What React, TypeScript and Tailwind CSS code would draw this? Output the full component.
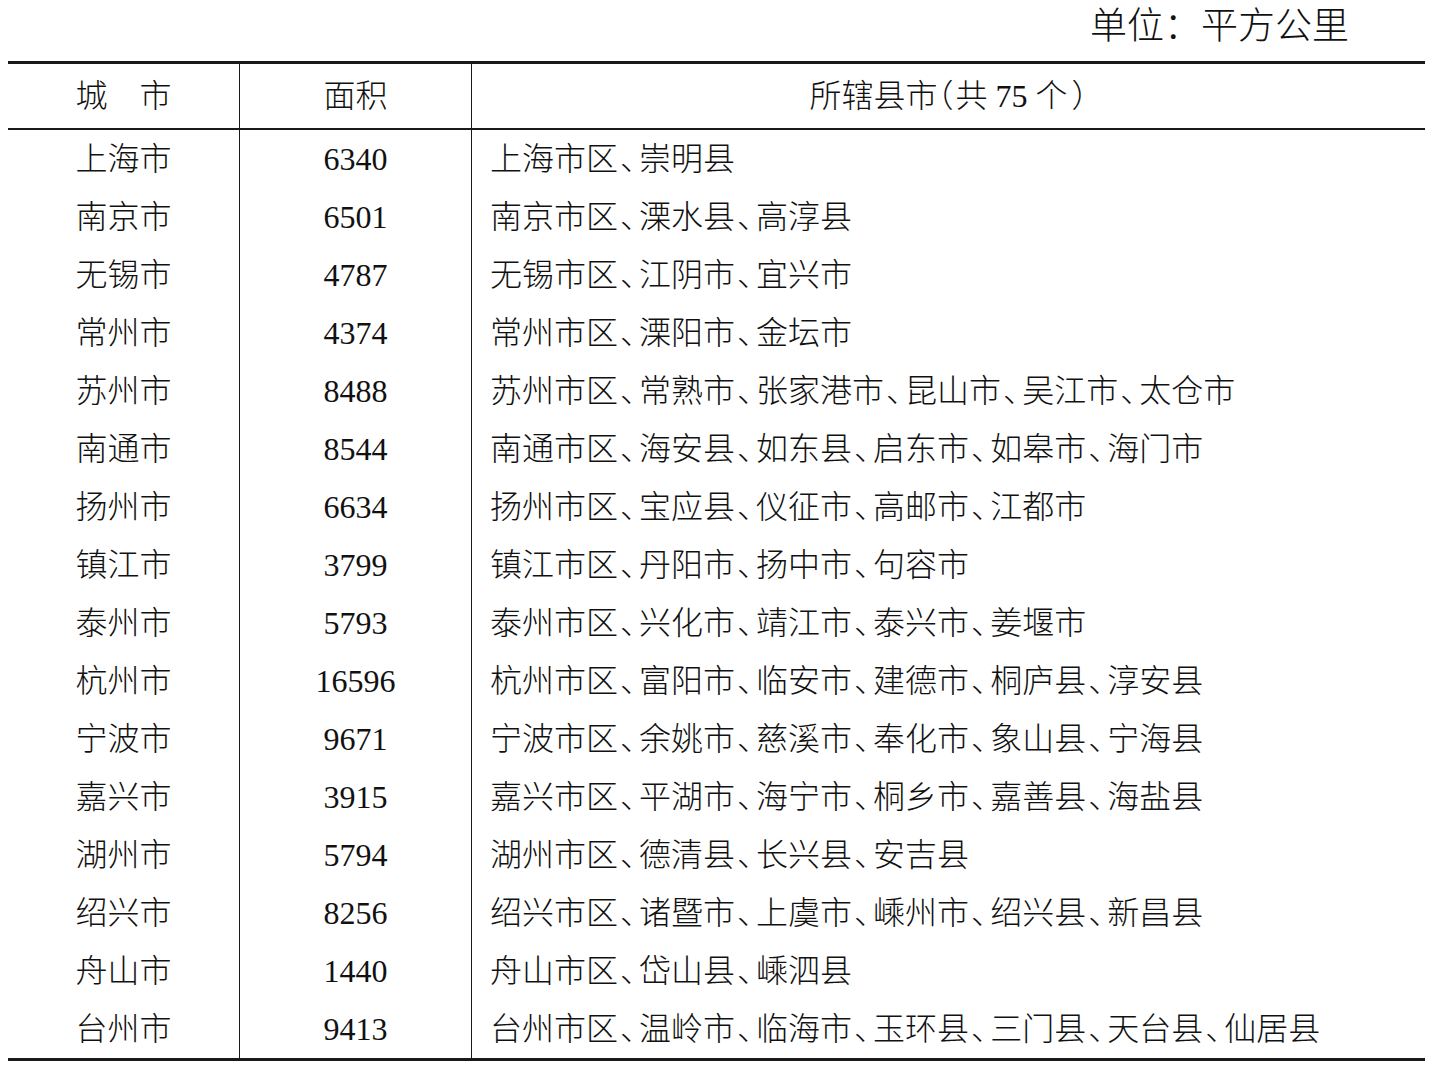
import React from "react";

const rows: [string, string, string][] = [
  ["上海市", "6340", "上海市区、崇明县"],
  ["南京市", "6501", "南京市区、溧水县、高淳县"],
  ["无锡市", "4787", "无锡市区、江阴市、宜兴市"],
  ["常州市", "4374", "常州市区、溧阳市、金坛市"],
  ["苏州市", "8488", "苏州市区、常熟市、张家港市、昆山市、吴江市、太仓市"],
  ["南通市", "8544", "南通市区、海安县、如东县、启东市、如皋市、海门市"],
  ["扬州市", "6634", "扬州市区、宝应县、仪征市、高邮市、江都市"],
  ["镇江市", "3799", "镇江市区、丹阳市、扬中市、句容市"],
  ["泰州市", "5793", "泰州市区、兴化市、靖江市、泰兴市、姜堰市"],
  ["杭州市", "16596", "杭州市区、富阳市、临安市、建德市、桐庐县、淳安县"],
  ["宁波市", "9671", "宁波市区、余姚市、慈溪市、奉化市、象山县、宁海县"],
  ["嘉兴市", "3915", "嘉兴市区、平湖市、海宁市、桐乡市、嘉善县、海盐县"],
  ["湖州市", "5794", "湖州市区、德清县、长兴县、安吉县"],
  ["绍兴市", "8256", "绍兴市区、诸暨市、上虞市、嵊州市、绍兴县、新昌县"],
  ["舟山市", "1440", "舟山市区、岱山县、嵊泗县"],
  ["台州市", "9413", "台州市区、温岭市、临海市、玉环县、三门县、天台县、仙居县"],
];

function List({ text }: { text: string }) {
  const parts = text.split("、");
  return (
    <span className="[font-feature-settings:'halt']">
      {parts.map((p, i) => (
        <React.Fragment key={i}>
          {i > 0 && <span className="ml-[2px] mr-[3px]">、</span>}
          {p}
        </React.Fragment>
      ))}
    </span>
  );
}

export default function App() {
  return (
    <div className="w-[1432px] h-[1069px] bg-white text-[#111] font-['Liberation_Serif','Noto_Sans_CJK_SC',serif] font-[300]">
      <div className="h-[61px] flex items-center justify-end pr-[83px] text-[37px] leading-none pb-[8px]">
        单位：平方公里
      </div>
      <div className="ml-[8px] w-[1417px] border-t-[3px] border-b-[3px] border-[#1a1a1a]">
        <div className="grid grid-cols-[232px_232px_1fr] h-[66px] border-b-2 border-[#1a1a1a] text-[32px] leading-none">
          <div className="flex items-center justify-center border-r border-[#1a1a1a]">城　市</div>
          <div className="flex items-center justify-center border-r border-[#1a1a1a]">面积</div>
          <div className="flex items-center justify-center [font-feature-settings:'halt']">所辖县市<span className="mr-[2px]">（</span>共 75 个<span className="ml-[4px]">）</span></div>
        </div>
        {rows.map(([c, a, d]) => (
          <div key={c} className="grid grid-cols-[232px_232px_1fr] h-[58px] text-[32px] leading-none">
            <div className="flex items-center justify-center border-r border-[#1a1a1a]">{c}</div>
            <div className="flex items-center justify-center border-r border-[#1a1a1a]">{a}</div>
            <div className="flex items-center pl-[18px]">
              <List text={d} />
            </div>
          </div>
        ))}
      </div>
    </div>
  );
}
